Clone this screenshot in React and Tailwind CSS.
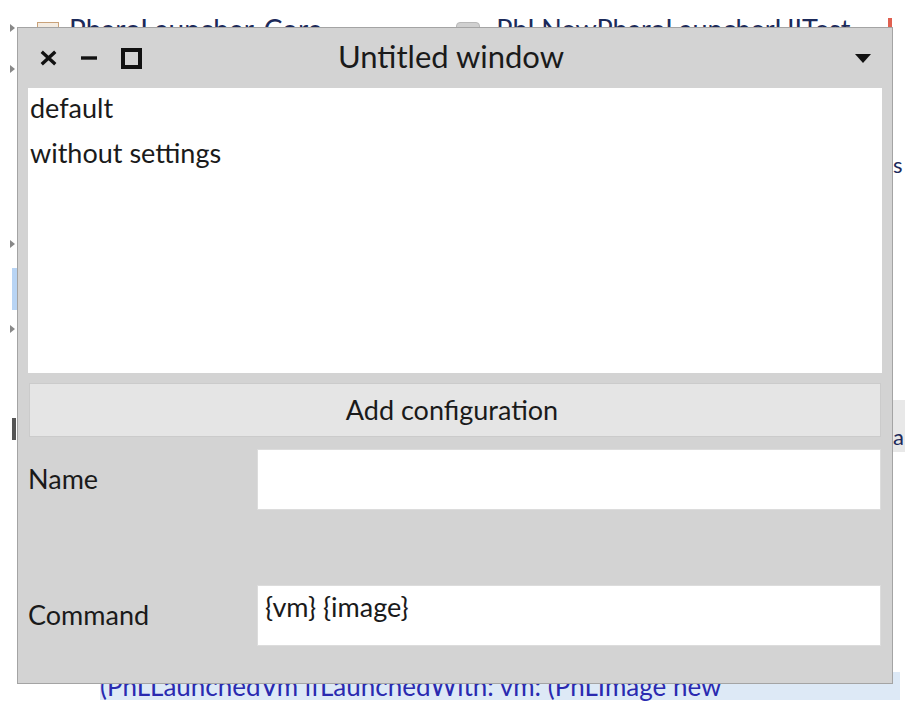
import React from 'react';

const font = { fontFamily: '"Lato", "Noto Sans", sans-serif' };

function TreeArrow() {
    return <div className="w-0 h-0 border-y-[4px] border-y-transparent border-l-[5px] border-l-[#888]" />;
}

function Background() {
    return (
        <div className="absolute inset-0 bg-white">
            {/* top row of the browser behind */}
            <div className="flex items-start pt-[14px] pl-[10px] gap-[22px]">
                <div className="mt-[10px]"><TreeArrow /></div>
                <div className="flex items-center gap-[10px]">
                    <div className="w-[22px] h-[14px] border border-[#c9a27a] bg-[#f4ece2]" />
                    <span className="text-[28px] leading-[30px] text-[#1c2a5a]" style={font}>PharoLauncher-Core</span>
                </div>
                <div className="ml-[112px] flex items-center gap-[16px]">
                    <div className="w-[24px] h-[14px] rounded-sm bg-[#d0d0d0] border border-[#b8b8b8]" />
                    <span className="text-[27px] leading-[30px] text-[#1c2a5a]" style={font}>PhLNewPharoLauncherUITest</span>
                </div>
                <div className="ml-[16px] mt-[4px] w-[4px] h-[12px] bg-[#e06050]" />
            </div>
            {/* left tree arrows */}
            <div className="absolute left-[10px] top-[65px]"><TreeArrow /></div>
            <div className="absolute left-[10px] top-[240px]"><TreeArrow /></div>
            <div className="absolute left-[10px] top-[325px]"><TreeArrow /></div>
            <div className="absolute left-[12px] top-[268px] w-[5px] h-[42px] bg-[#b8d4f4]" />
            <div className="absolute left-[12px] top-[418px] w-[4px] h-[22px] bg-[#555]" />
            {/* right edge fragments */}
            <div className="absolute left-[893px] top-[148px] text-[22px] text-[#1c2a5a]" style={font}>s</div>
            <div className="absolute left-[893px] top-[400px] w-[12px] h-[52px] bg-[#e8e8e8]" />
            <div className="absolute left-[893px] top-[420px] text-[22px] text-[#1c2a5a]" style={font}>a</div>
            {/* bottom source line */}
            <div className="absolute left-[100px] top-[672px] w-[800px] h-[28px] bg-[#dde9f6] text-[26px] leading-[28px] text-[#2a2ab0] whitespace-nowrap" style={font}>
                (PhLLaunchedVm ifLaunchedWith: vm: (PhLImage new
            </div>
        </div>
    );
}

function Field({ label, value }) {
    return (
        <div className="flex items-center">
            <div className="w-[229px] text-[27px] text-[#1a1a1a]" style={font}>{label}</div>
            <div className="flex-1 h-[61px] mr-[1px] bg-white border border-[#dcdcdc] px-[7px] pt-[5px] text-[27px] leading-[32px] text-[#1a1a1a]" style={font}>
                {value}
            </div>
        </div>
    );
}

export default function App() {
    return (
        <div className="relative w-[920px] h-[708px] overflow-hidden bg-white">
            <Background />
            {/* the window on top */}
            <div className="absolute left-[17px] top-[27px] w-[876px] h-[657px] border border-[#a4a4a4] bg-[#d3d3d3] flex flex-col">
                <div className="relative h-[60px] flex items-center shrink-0">
                    <div className="flex items-center pl-[22px] gap-[22px]">
                        <svg width="18" height="18" viewBox="0 0 18 18">
                            <path d="M3 4 L14 14 M14 4 L3 14" stroke="#111" strokeWidth="3.4" strokeLinecap="square" />
                        </svg>
                        <svg width="18" height="18" viewBox="0 0 18 18">
                            <path d="M1 9 H17" stroke="#111" strokeWidth="3.4" />
                        </svg>
                        <div className="w-[21px] h-[21px] border-[4px] border-[#111] ml-[1px]" />
                    </div>
                    <div className="absolute inset-0 flex items-center justify-center pointer-events-none">
                        <span className="text-[31px] text-[#1a1a1a] ml-[-8px] mt-[-4px]" style={font}>Untitled window</span>
                    </div>
                    <div className="ml-auto mr-[21px] w-0 h-0 border-x-[8px] border-x-transparent border-t-[9px] border-t-[#111]" />
                </div>
                <div className="flex-1 flex flex-col px-[10px] pr-[10px]">
                    <div className="h-[285px] bg-white pl-[2px] flex flex-col gap-[6px] text-[27px] leading-[39px] text-[#1a1a1a]" style={font}>
                        <div>default</div>
                        <div>without settings</div>
                    </div>
                    <button className="mt-[10px] mx-[1px] h-[54px] bg-[#e5e5e5] border border-[#cbcbcb] text-[27px] text-[#1a1a1a]" style={font}>
                        <span className="ml-[-6px]">Add configuration</span>
                    </button>
                    <div className="mt-[12px] flex flex-col gap-[75px]">
                        <Field label="Name" value="" />
                        <Field label="Command" value="{vm} {image}" />
                    </div>
                </div>
            </div>
        </div>
    );
}
